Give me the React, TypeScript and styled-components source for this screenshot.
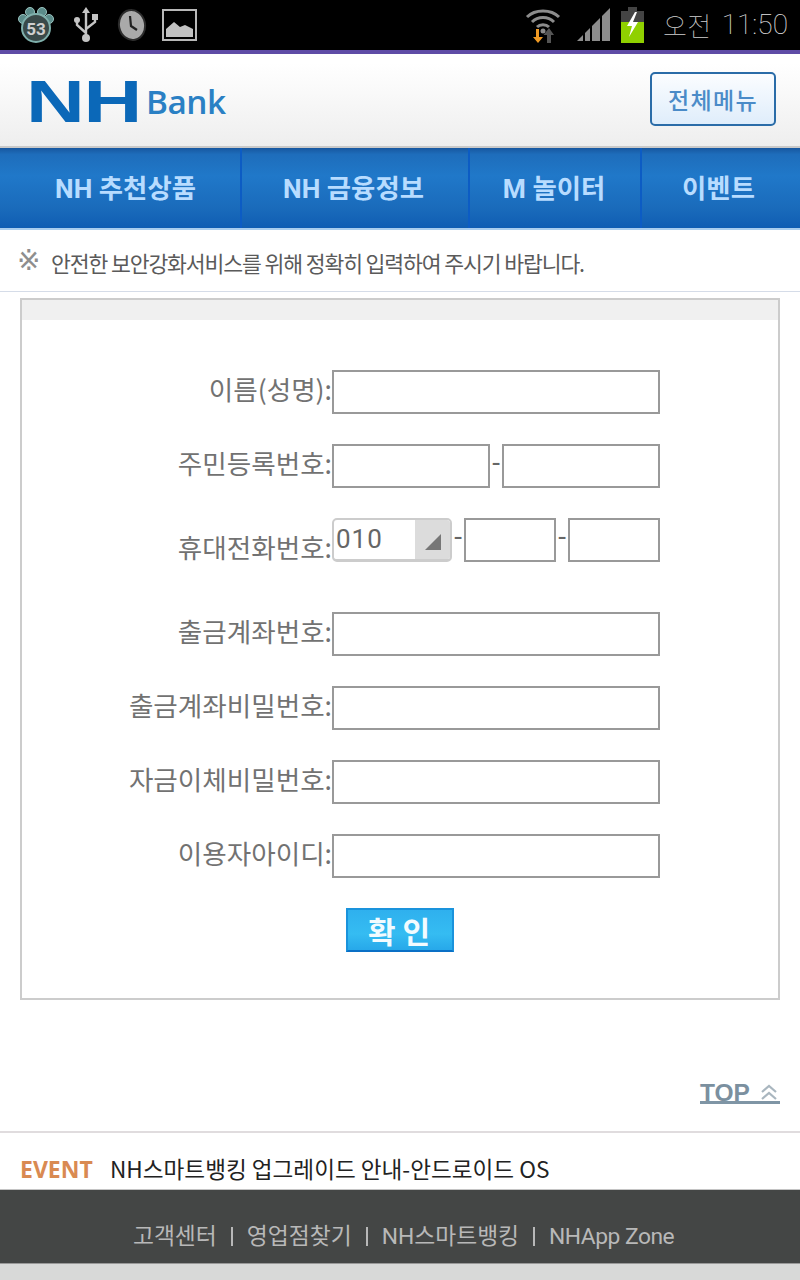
import React from "react";
import styled, { createGlobalStyle } from "styled-components";

const Global = createGlobalStyle`
  html, body { margin: 0; padding: 0; background: #fff; }
  body { font-family: "Noto Sans CJK KR", "Roboto", sans-serif; }
  * { box-sizing: border-box; }
`;
const Page = styled.div`width: 800px; height: 1280px; overflow: hidden; display: flex; flex-direction: column;`;

const StatusBar = styled.div`
  height: 54px; flex: none; background: #000; border-bottom: 4px solid #5f4ca6;
  display: flex; align-items: center; padding: 0 12px 0 17px;
`;
const StatusLeft = styled.div`
  display: flex; align-items: center; gap: 19px; flex: 1; height: 50px;
  & > svg:last-child { margin-left: -4px; }
`;
const StatusRight = styled.div`display: flex; align-items: center; gap: 11px; height: 50px;`;
const WifiSlot = styled.span`display: flex; margin-right: 5px;`;
const Clock = styled.span`
  font-family: "Roboto", sans-serif; font-weight: 100; font-size: 28px; color: #e4e4e4;
  margin-left: 8px; white-space: nowrap; line-height: 54px; display: flex; gap: 10px;
`;
const ClockAm = styled.span`font-family: "Noto Sans CJK KR", sans-serif; font-weight: 100; font-size: 26px; color: #cfcfcf; letter-spacing: 0.5px;`;

const Header = styled.header`
  height: 94px; flex: none; background: linear-gradient(#fff 10%, #eeeeee 100%);
  border-bottom: 2px solid #c9c9c9; display: flex; align-items: center; justify-content: space-between;
  padding: 0 24px 0 26px;
`;
const Logo = styled.div`display: flex; align-items: flex-end; height: 40px; margin-top: 3px;`;
const LogoNH = styled.span`
  font-family: "Liberation Sans", sans-serif; font-weight: 700; font-size: 59px; line-height: 40px; color: #0b68b8;
  display: inline-block; width: 114px; transform: scaleX(1.38); transform-origin: left center; letter-spacing: -1px;
`;
const LogoBank = styled.span`
  font-family: "Open Sans", sans-serif; font-weight: 600; font-size: 33px; line-height: 36px; color: #2a80c4;
  margin: 0 0 2px 6px; letter-spacing: -0.5px; transform: scaleX(1.01); transform-origin: left center;
`;
const MenuButton = styled.button`
  width: 126px; height: 54px; border: 2px solid #2a6ca8; border-radius: 5px; padding: 0;
  background: linear-gradient(#fbfdff, #dfedfb); color: #4a8bc8; font-family: inherit;
  font-size: 23px; font-weight: 500; letter-spacing: 1.3px; margin-bottom: 2px; line-height: 46px;
`;

const Nav = styled.nav`
  height: 82px; flex: none; display: flex; border-bottom: 2px solid #a9cdee;
  background: linear-gradient(#17579f 0%, #1e6dbb 8%, #2078c9 35%, #1a6bbb 75%, #0f5db3 100%);
`;
const NavItem = styled.div<{ $w: number; $shift: number }>`
  width: ${p => p.$w}px; flex: none; display: flex; align-items: center; justify-content: center;
  font-family: "Roboto", "Noto Sans CJK KR", sans-serif; font-size: 26.4px; font-weight: 700; color: #b8dcff;
  border-right: 2px solid #0c5cc4; padding-bottom: 4px;
  padding-left: ${p => Math.max(p.$shift, 0)}px; padding-right: ${p => Math.max(-p.$shift, 0)}px;
  &:last-child { border-right: 0; }
`;

const Notice = styled.div`
  height: 62px; flex: none; border-bottom: 1px solid #d5dce8; display: flex; align-items: center; padding: 4px 0 0 18px;
  color: #5a5a5a; font-size: 21.6px; letter-spacing: -1.13px;
`;
const NoticeMark = styled.span`font-size: 28px; color: #8e8e8e; width: 34px; flex: none; letter-spacing: 0; margin: -3px 0 0 -1px; font-family: "DejaVu Sans", sans-serif; line-height: 32px;`;

const FormBox = styled.section`
  width: 760px; margin: 6px 0 0 20px; height: 702px; flex: none; border: 2px solid #ccc;
`;
const BoxHead = styled.div`height: 20px; background: #f0f0f0;`;
const Rows = styled.div`padding: 50px 0 46px; display: flex; flex-direction: column; gap: 30px;`;
const Row = styled.div<{ $extra?: boolean }>`
  display: flex; align-items: flex-start; height: 44px; margin-bottom: ${p => (p.$extra ? 20 : 0)}px;
`;
const Label = styled.label<{ $low?: boolean }>`
  width: 310px; flex: none; text-align: right; color: #727272; font-size: 26.6px; line-height: 44px; white-space: nowrap;
  transform: translateY(${p => (p.$low ? 7 : -3)}px);
`;
const Input = styled.div<{ $w: number }>`
  width: ${p => p.$w}px; height: 44px; flex: none; border: 2px solid #999; background: #fff;
`;
const Dash = styled.span<{ $w: number }>`
  width: ${p => p.$w}px; flex: none; text-align: center; color: #666; font-family: "Roboto", sans-serif; font-size: 28px; line-height: 38px;
`;
const Select = styled.div`
  width: 120px; height: 44px; flex: none; display: flex; border: 2px solid #ccc; border-bottom-width: 3px; border-radius: 5px;
  background: #fff; overflow: hidden;
`;
const SelectValue = styled.span`
  flex: 1; padding-left: 2px; font-family: "Roboto", sans-serif; font-size: 26px; line-height: 38px; color: #666; letter-spacing: 1px;
`;
const SelectArrow = styled.span`
  width: 35px; flex: none; background: #dcdcdc; display: flex; align-items: flex-end; justify-content: center; padding-bottom: 9px;
`;
const ConfirmWrap = styled.div`display: flex; justify-content: flex-start; padding-left: 324px;`;
const Confirm = styled.button`
  width: 108px; height: 44px; padding: 0 2px 0 0; border: 2px solid #1a93dc; border-bottom-color: #0a70c6;
  background: linear-gradient(#2fb0ee, #35bcf2 60%, #27a8ea); color: #f2fbff; font-family: inherit;
  font-size: 30px; font-weight: 700; line-height: 36px;
`;

const TopRow = styled.div`
  height: 131px; flex: none; display: flex; justify-content: flex-end; align-items: flex-start; padding: 79px 20px 0 0;
`;
const TopLink = styled.span`
  width: 80px; height: 25px; border-bottom: 3px solid #7f95a5; color: #7b909f; display: flex; align-items: flex-end; justify-content: space-between;
  font-family: "Liberation Sans", sans-serif; font-weight: 700; font-size: 24.5px; line-height: 16px; padding-right: 2px;
`;
const Event = styled.div`
  height: 59px; flex: none; border-top: 2px solid #e0dcde; border-bottom: 1px solid #c4c4c4; display: flex; align-items: center;
  padding: 16px 0 0 20px;
`;
const EventTag = styled.span`
  font-family: "Open Sans", sans-serif; font-weight: 700; font-size: 23px; color: #d98a52; width: 90px; flex: none; line-height: 30px;
`;
const EventText = styled.span`font-size: 22.6px; color: #222; white-space: nowrap; line-height: 30px;`;
const Footer = styled.footer`
  height: 74px; flex: none; background: #444645; border-bottom: 1px solid #999;
  display: flex; align-items: center; justify-content: center; padding: 20px 0 0 7px; gap: 14px;
  color: #b8b8b8; font-family: "Roboto", "Noto Sans CJK KR", sans-serif; font-size: 22.8px; line-height: 30px; white-space: nowrap;
`;
const FootSep = styled.i`width: 2px; height: 19px; background: #b8b8b8; flex: none;`;
const FootLatin = styled.span`letter-spacing: -0.5px;`;
const Strip = styled.div`flex: 1; background: #d8d9d8;`;

const Paw = () => (
  <svg width="38" height="38" viewBox="0 0 38 38">
    <g fill="#5c8c8a" stroke="#9ac4c0" strokeWidth="1">
      <circle cx="6" cy="13" r="4.5" /><circle cx="13" cy="6" r="4.5" /><circle cx="25" cy="6" r="4.5" /><circle cx="32" cy="13" r="4.5" />
    </g>
    <circle cx="19" cy="22" r="14" fill="#3a4a4a" stroke="#7fb0ac" strokeWidth="2" />
    <text x="19" y="29" textAnchor="middle" fill="#cfcfcf" fontSize="17" fontWeight="700" fontFamily="Roboto, sans-serif">53</text>
  </svg>
);
const Usb = () => (
  <svg width="24" height="36" viewBox="0 0 24 36">
    <g stroke="#c4c4c4" strokeWidth="2.4" fill="none">
      <path d="M12 4V30" /><path d="M12 26L3 18V14" /><path d="M12 22L21 15V11" />
    </g>
    <g fill="#c4c4c4">
      <path d="M12 0L16 6H8Z" /><circle cx="12" cy="31" r="4" /><circle cx="3" cy="13" r="3" /><rect x="18" y="7" width="6" height="6" />
    </g>
  </svg>
);
const Timer = () => (
  <svg width="30" height="32" viewBox="0 0 30 32">
    <ellipse cx="15" cy="16" rx="13" ry="15" fill="#a9a9a9" stroke="#2c2c2c" strokeWidth="2" transform="rotate(-12 15 16)" />
    <path d="M13 7L14 17L20 21" stroke="#222" strokeWidth="2.2" fill="none" />
  </svg>
);
const Picture = () => (
  <svg width="35" height="32" viewBox="0 0 35 32">
    <rect x="1" y="1" width="33" height="30" fill="#000" stroke="#b8b8b8" strokeWidth="2" />
    <path d="M4 28V20L12 13L18 18L23 16L31 20V28Z" fill="#c2c2c2" />
  </svg>
);
const Wifi = () => (
  <svg width="36" height="36" viewBox="0 0 36 36">
    <g fill="none" stroke="#8c8c8c" strokeWidth="3">
      <path d="M2 10C10 2 26 2 34 10" /><path d="M7 15C13 9 23 9 29 15" /><path d="M12 20C15 17 21 17 24 20" />
    </g>
    <circle cx="18" cy="24" r="2.5" fill="#8c8c8c" />
    <path d="M14 22V30H18L13 36L8 30H11V22Z" fill="#f09a24" />
    <path d="M22 36V28H18.5L24 21L29 28H26V36Z" fill="#555" />
  </svg>
);
const Signal = () => (
  <svg width="33" height="34" viewBox="0 0 33 34">
    <path d="M0 33L6 27V33Z" fill="#8c8c8c" />
    <path d="M8 25L13 20V33H8Z" fill="#8c8c8c" />
    <path d="M15 18L23 10V33H15Z" fill="#8c8c8c" />
    <path d="M25 8L33 0V33H25Z" fill="#8c8c8c" />
  </svg>
);
const Battery = () => (
  <svg width="23" height="36" viewBox="0 0 23 36">
    <rect x="7" y="0" width="9" height="4" fill="#444" />
    <rect x="0" y="4" width="23" height="11" fill="#444" />
    <rect x="0" y="15" width="23" height="21" fill="#90d000" />
    <path d="M14 5L6 19H11L8 30L17 15H12L16 5Z" fill="#fff" />
  </svg>
);
const Chevrons = () => (
  <svg width="18" height="18" viewBox="0 0 18 18">
    <path d="M2 9L9 3L16 9M2 16L9 10L16 16" fill="none" stroke="#a9b6bf" strokeWidth="2.2" />
  </svg>
);
const Triangle = () => (
  <svg width="16" height="16" viewBox="0 0 16 16"><path d="M16 0V16H0Z" fill="#777" /></svg>
);

const plain: [string, string][] = [
  ["출금계좌번호:", "a"], ["출금계좌비밀번호:", "b"], ["자금이체비밀번호:", "c"], ["이용자아이디:", "d"],
];

export default function App() {
  return (
    <Page>
      <Global />
      <StatusBar>
        <StatusLeft>
          <Paw /><Usb /><Timer /><Picture />
        </StatusLeft>
        <StatusRight>
          <WifiSlot><Wifi /></WifiSlot><Signal /><Battery />
          <Clock><ClockAm>오전</ClockAm>11:50</Clock>
        </StatusRight>
      </StatusBar>
      <Header>
        <Logo>
          <LogoNH>NH</LogoNH>
          <LogoBank>Bank</LogoBank>
        </Logo>
        <MenuButton>전체메뉴</MenuButton>
      </Header>
      <Nav>
        <NavItem $w={242} $shift={11}>NH 추천상품</NavItem>
        <NavItem $w={228} $shift={-3}>NH 금융정보</NavItem>
        <NavItem $w={172} $shift={-2}>M 놀이터</NavItem>
        <NavItem $w={158} $shift={-5}>이벤트</NavItem>
      </Nav>
      <Notice>
        <NoticeMark>※</NoticeMark>
        안전한 보안강화서비스를 위해 정확히 입력하여 주시기 바랍니다.
      </Notice>
      <FormBox>
        <BoxHead />
        <Rows>
          <Row><Label>이름(성명):</Label><Input $w={328} /></Row>
          <Row>
            <Label>주민등록번호:</Label><Input $w={158} /><Dash $w={12}>-</Dash><Input $w={158} />
          </Row>
          <Row $extra>
            <Label $low>휴대전화번호:</Label>
            <Select>
              <SelectValue>010</SelectValue>
              <SelectArrow><Triangle /></SelectArrow>
            </Select>
            <Dash $w={12}>-</Dash><Input $w={92} /><Dash $w={12}>-</Dash><Input $w={92} />
          </Row>
          {plain.map(([t, k]) => (
            <Row key={k}><Label>{t}</Label><Input $w={328} /></Row>
          ))}
          <ConfirmWrap><Confirm>확 인</Confirm></ConfirmWrap>
        </Rows>
      </FormBox>
      <TopRow>
        <TopLink>TOP<Chevrons /></TopLink>
      </TopRow>
      <Event>
        <EventTag>EVENT</EventTag>
        <EventText>NH스마트뱅킹 업그레이드 안내-안드로이드 OS</EventText>
      </Event>
      <Footer>
        <span>고객센터</span><FootSep /><span>영업점찾기</span><FootSep /><span>NH스마트뱅킹</span><FootSep /><FootLatin>NHApp Zone</FootLatin>
      </Footer>
      <Strip />
    </Page>
  );
}
